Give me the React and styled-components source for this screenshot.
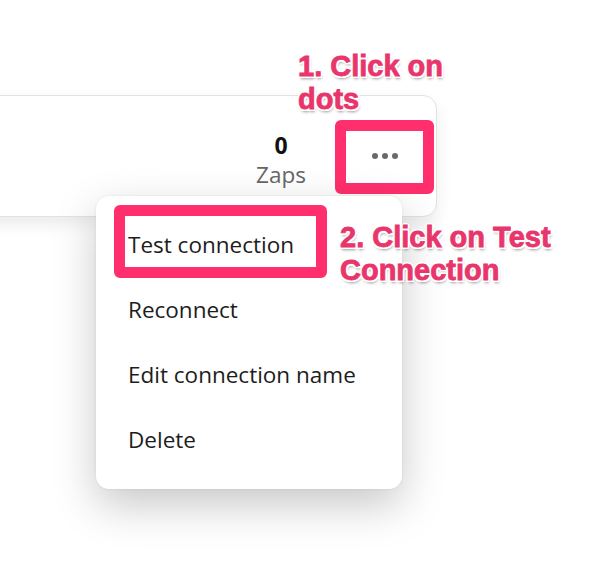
import React from "react";
import styled, { createGlobalStyle } from "styled-components";

const Global = createGlobalStyle`
  html, body { margin: 0; padding: 0; background: #ffffff; }
  body { font-family: "Open Sans", "Noto Sans", sans-serif; }
`;

const Page = styled.div`
  position: relative;
  width: 600px;
  height: 566px;
  overflow: hidden;
  padding-top: 95px;
  box-sizing: border-box;
`;

const Card = styled.div`
  margin-left: -20px;
  width: 457px;
  height: 122px;
  box-sizing: border-box;
  border: 1px solid #e2e2e2;
  border-radius: 14px;
  background: #fff;
  box-shadow: 0 8px 16px rgba(0, 0, 0, 0.08);
  display: flex;
  align-items: center;
  justify-content: flex-end;
  gap: 40px;
  padding: 0 12px 0 0;
`;

const Stat = styled.div`
  display: flex;
  flex-direction: column;
  align-items: center;
  width: 50px;
  margin-top: 8px;
`;

const StatValue = styled.div`
  font-family: "Open Sans", sans-serif;
  font-weight: 700;
  font-size: 23px;
  line-height: 30px;
  color: #111;
`;

const StatLabel = styled.div`
  font-family: "Open Sans", sans-serif;
  font-size: 22.5px;
  line-height: 30px;
  color: #666;
`;

const MenuAnchor = styled.div`
  position: relative;
`;

const DotsButton = styled.button`
  width: 78px;
  height: 51px;
  border: none;
  background: #fff;
  display: flex;
  align-items: center;
  justify-content: center;
  gap: 4px;
  padding: 0;
  cursor: pointer;
`;

const Dot = styled.span`
  width: 6px;
  height: 6px;
  border-radius: 50%;
  background: #6a6a6a;
`;

const Highlight = styled.div`
  position: absolute;
  top: -11px;
  left: -11px;
  right: -10px;
  bottom: -12px;
  border: 11px solid #ff2f6e;
  border-radius: 6px;
  pointer-events: none;
`;

const Menu = styled.div`
  position: absolute;
  top: 65px;
  right: 22px;
  width: 306px;
  box-sizing: border-box;
  background: #fff;
  border-radius: 13px;
  box-shadow: 0 16px 44px rgba(0, 0, 0, 0.22), 0 0 3px rgba(0, 0, 0, 0.08);
  padding: 16px 0 17px;
  display: flex;
  flex-direction: column;
  z-index: 2;
`;

const MenuItem = styled.div`
  position: relative;
  height: 65px;
  display: flex;
  align-items: center;
  padding-left: 32px;
  font-family: "Open Sans", sans-serif;
  font-size: 22.5px;
  color: #1d1d1d;
  white-space: nowrap;
`;

const ItemHighlight = styled.div`
  position: absolute;
  left: 18px;
  top: -7px;
  width: 213px;
  height: 73px;
  box-sizing: border-box;
  border: 11px solid #ff2f6e;
  border-radius: 6px;
  pointer-events: none;
`;

const Callout = styled.div`
  position: absolute;
  left: ${(p) => p.$x}px;
  top: ${(p) => p.$y}px;
  font-family: "Liberation Sans", Arial, sans-serif;
  font-weight: 700;
  font-size: 29px;
  line-height: 33px;
  color: #e8356c;
  -webkit-text-stroke: 0.8px #e8356c;
  white-space: nowrap;
  z-index: 3;
  text-shadow: -1.5px -1.5px 0 #fff, 1.5px -1.5px 0 #fff, -1.5px 1.5px 0 #fff,
    1.5px 1.5px 0 #fff, 0 -2px 0 #fff, 0 2px 0 #fff, -2px 0 0 #fff, 2px 0 0 #fff,
    1px 2.5px 3px rgba(0, 0, 0, 0.4);
`;

const items = ["Test connection", "Reconnect", "Edit connection name", "Delete"];

export default function App() {
  return (
    <Page>
      <Global />
      <Card>
        <Stat>
          <StatValue>0</StatValue>
          <StatLabel>Zaps</StatLabel>
        </Stat>
        <MenuAnchor>
          <DotsButton aria-label="More">
            <Dot />
            <Dot />
            <Dot />
          </DotsButton>
          <Highlight />
          <Menu>
            {items.map((label, i) => (
              <MenuItem key={label}>
                {i === 0 && <ItemHighlight />}
                {label}
              </MenuItem>
            ))}
          </Menu>
        </MenuAnchor>
      </Card>
      <Callout $x={298} $y={50}>
        1. Click on
        <br />
        dots
      </Callout>
      <Callout $x={340} $y={221}>
        2. Click on Test
        <br />
        Connection
      </Callout>
    </Page>
  );
}
